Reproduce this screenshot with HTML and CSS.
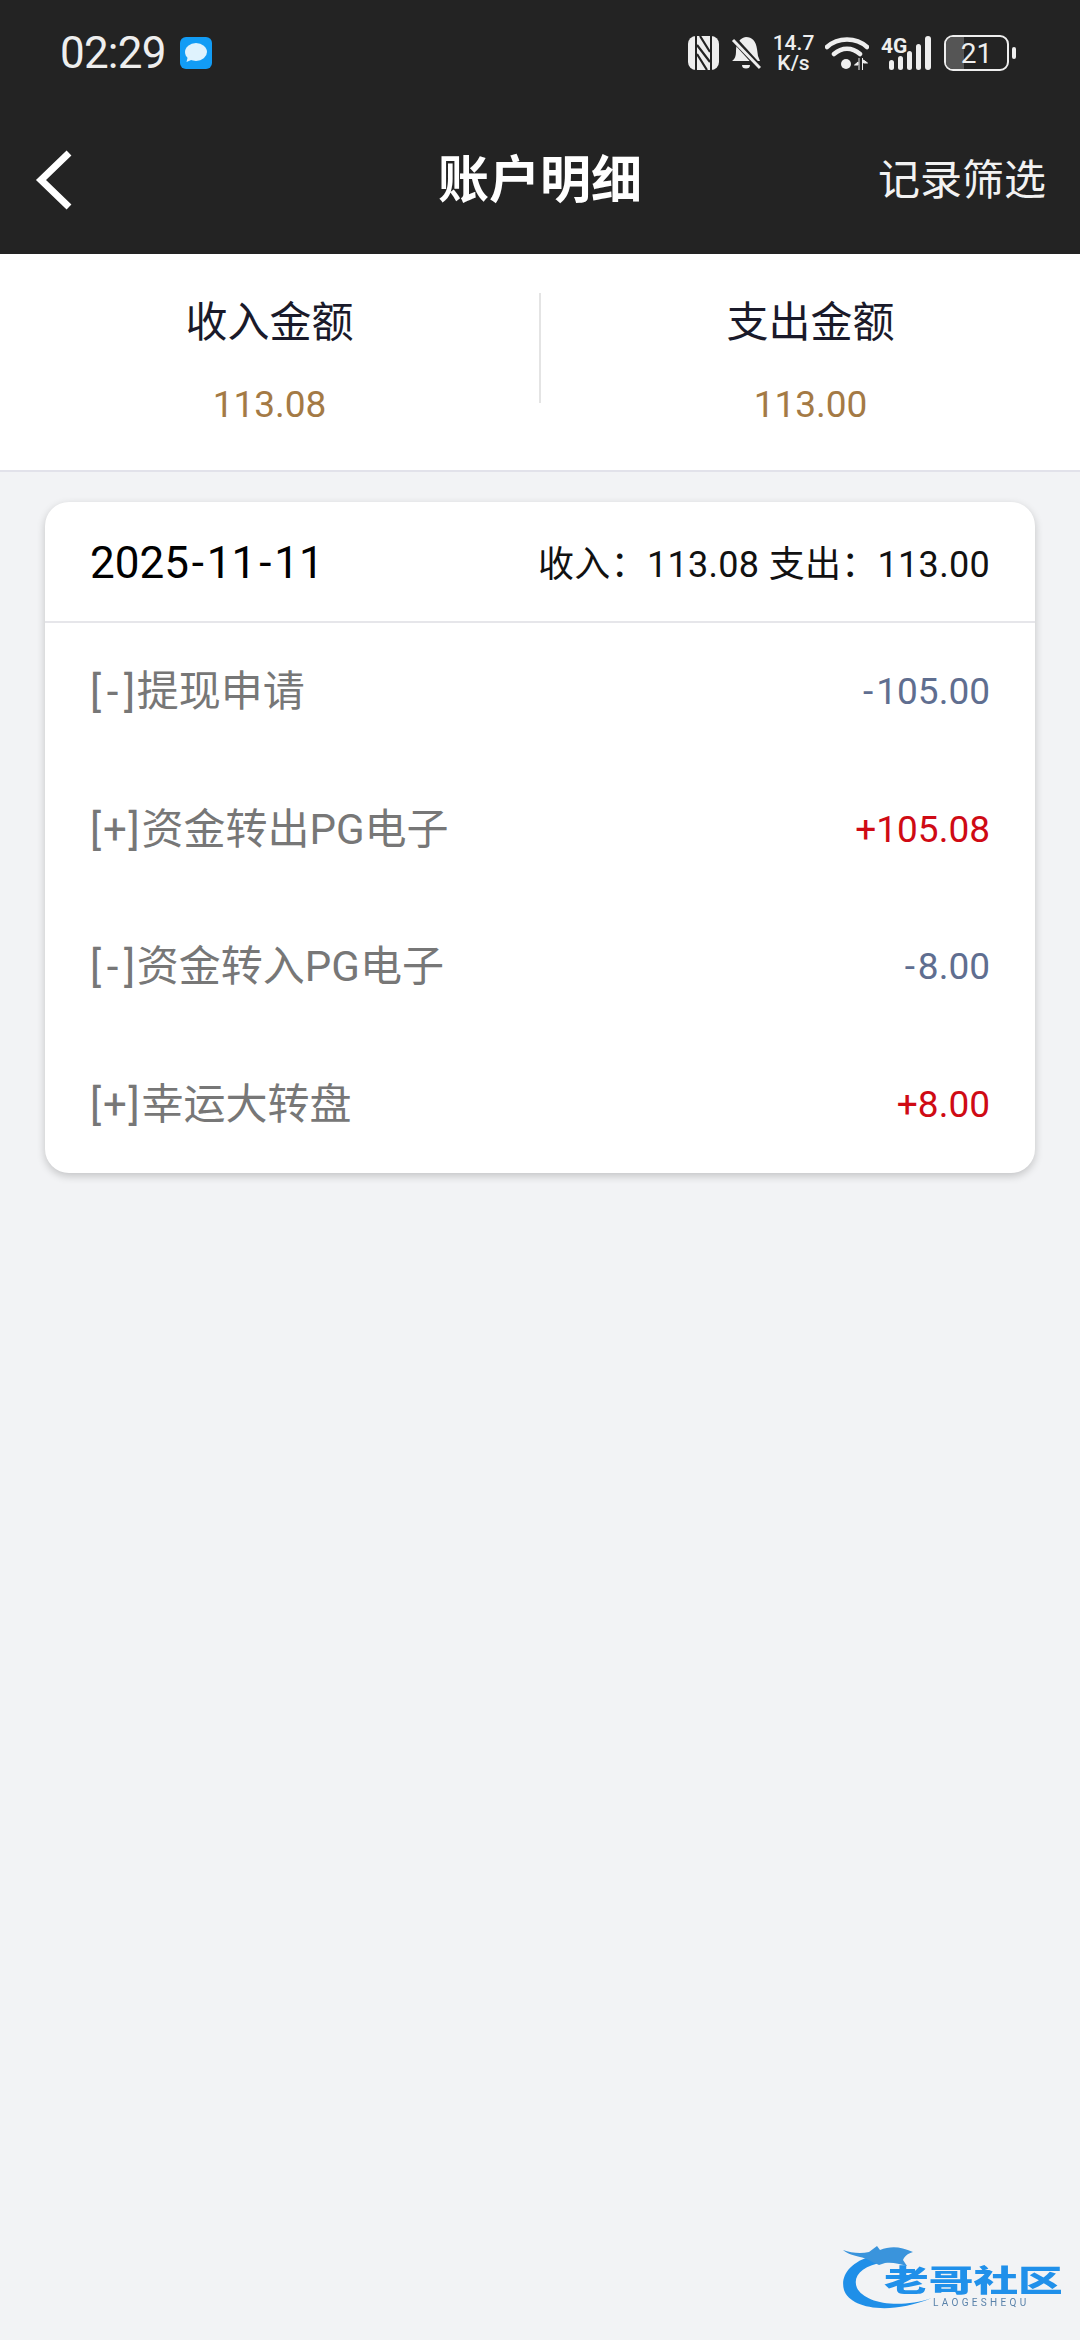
FILE: index.html
```html
<!DOCTYPE html>
<html lang="zh-CN">
<head>
  <meta charset="UTF-8">
  <meta name="viewport" content="width=device-width, initial-scale=1.0">
  <title>账户明细</title>
  <link rel="stylesheet" href="styles.css">
</head>
<body>

  <div class="top">
    <!-- status bar -->
    <div class="status">
      <span class="time">02:29</span>
      <svg class="msg-icon" width="32" height="32" viewBox="0 0 32 32">
        <rect width="32" height="32" rx="6" fill="#129cf5"/>
        <ellipse cx="16" cy="15" rx="11" ry="9" fill="#dff2fd"/>
        <path d="M8 19l-1.500 6 7-3z" fill="#dff2fd"/>
      </svg>
      <div class="status-right">
        <svg width="31" height="34" viewBox="0 0 31 34">
          <rect width="31" height="34" rx="8" fill="#eee"/>
          <path d="M8 0v34M23 0v34" stroke="#232323" stroke-width="2"/>
          <path d="M9 9l13 17M9 18l10 16M22 16L12 0" fill="none" stroke="#232323" stroke-width="2.200"/>
        </svg>
        <svg width="30" height="34" viewBox="0 0 30 34">
          <path d="M1 25c3-2 4-5 4-10 0-8 4-13 10-14 6 0 10 4 11 12l1 7 2 5z" fill="#eee"/>
          <path d="M11 29a4 3.500 0 0 0 8 0z" fill="#eee"/>
          <path d="M0 0l30 33" stroke="#232323" stroke-width="6"/>
          <path d="M2 4l27 28" stroke="#eee" stroke-width="3"/>
        </svg>
        <div class="speed"><span>14.7</span><span>K/s</span></div>
        <svg class="wifi" width="44" height="34" viewBox="0 0 44 34">
          <path d="M2 11c11-10 29-10 40 0M9 18c8-7 18-7 26 0" fill="none" stroke="#eee" stroke-width="4.500" stroke-linecap="round"/>
          <circle cx="21" cy="28" r="5" fill="#eee"/>
          <path d="M33 26l-3.500 3H33zM34 22v12M37.500 22v12M38.500 24l4 3h-4z" fill="#eee" stroke="#eee" stroke-width="1"/>
        </svg>
        <div class="net">
          <span class="net-label">4G</span>
          <svg width="42" height="34" viewBox="0 0 42 34">
            <rect x="0" y="24" width="5" height="10" rx="2.500" fill="#eee"/>
            <rect x="9" y="20" width="5" height="14" rx="2.500" fill="#eee"/>
            <rect x="18" y="15" width="5" height="19" rx="2.500" fill="#eee"/>
            <rect x="27" y="8" width="5" height="26" rx="2.500" fill="#eee"/>
            <rect x="36" y="0" width="6" height="34" rx="3" fill="#eee"/>
          </svg>
        </div>
        <div class="battery">
          <div class="battery-box">
            <div class="battery-fill"></div>
            <span class="battery-num">21</span>
          </div>
          <div class="battery-tip"></div>
        </div>
      </div>
    </div>

    <!-- nav -->
    <div class="nav">
      <svg class="back" width="38" height="60" viewBox="0 0 38 60">
        <path d="M34 3L6 30l28 27" fill="none" stroke="#fff" stroke-width="7"/>
      </svg>
      <div class="nav-title">账户明细</div>
      <div class="nav-link">记录筛选</div>
    </div>
  </div>

  <div class="summary">
    <div class="summary-col">
      <div class="summary-label">收入金额</div>
      <div class="summary-num">113.08</div>
    </div>
    <div class="summary-line"></div>
    <div class="summary-col">
      <div class="summary-label">支出金额</div>
      <div class="summary-num">113.00</div>
    </div>
  </div>

  <div class="card">
    <div class="card-head">
      <span class="card-date">2025<span class="dash">-</span>11<span class="dash">-</span>11</span>
      <span class="card-total">收入：113.08 支出：113.00</span>
    </div>
    <div class="rows">
      <div class="row">
        <span class="row-name"><span class="tag">[<span class="dash">-</span>]</span>提现申请</span>
        <span class="row-num minus"><span class="dash">-</span>105.00</span>
      </div>
      <div class="row">
        <span class="row-name"><span class="tag">[+]</span>资金转出PG电子</span>
        <span class="row-num plus">+105.08</span>
      </div>
      <div class="row">
        <span class="row-name"><span class="tag">[<span class="dash">-</span>]</span>资金转入PG电子</span>
        <span class="row-num minus"><span class="dash">-</span>8.00</span>
      </div>
      <div class="row">
        <span class="row-name"><span class="tag">[+]</span>幸运大转盘</span>
        <span class="row-num plus">+8.00</span>
      </div>
    </div>
  </div>

  <!-- watermark -->
  <div class="logo">
    <svg class="logo-dragon" width="100" height="72" viewBox="0 0 100 72">
      <path d="M32 12C10 18 0 32 4 46c6 18 44 26 88 8C56 66 24 58 17 44 12 32 22 22 44 18z" fill="#1f8fe8"/>
      <path d="M3 6c8 3 18 4 26 2l8-6 3 4c10-4 20-4 33 2-6 2-8 4-10 8l4 6c-8-2-14-4-22-3l-6 2C32 18 26 14 20 13 12 11 6 9 3 6z" fill="#3a94dc"/>
    </svg>
    <div class="logo-name">老哥社区</div>
    <div class="logo-sub">LAOGESHEQU</div>
  </div>

</body>
</html>
```

FILE: styles.css
```css
body {
  margin: 0;
  width: 1080px;
  height: 2340px;
  overflow: hidden;
  position: relative;
  background: #f2f3f5;
  font-family: Roboto, "Noto Sans CJK SC", sans-serif;
}

.top {
  height: 254px;
  background: #232323;
}

/* status bar */
.status {
  display: flex;
  align-items: center;
  height: 106px;
  padding: 0 64px 0 60px;
}

.time {
  font-size: 44px;
  color: #eeeeee;
  letter-spacing: -0.8px;
}

.msg-icon {
  margin-left: 14px;
}

.status-right {
  display: flex;
  align-items: center;
  gap: 12px;
  margin-left: auto;
}

.speed {
  display: flex;
  flex-direction: column;
  align-items: center;
  width: 41px;
  font-size: 21px;
  line-height: 20px;
  font-weight: 500;
  color: #eeeeee;
}

.wifi {
  margin-left: -1px;
}

.net {
  display: flex;
  align-items: flex-start;
  height: 34px;
}

.net-label {
  width: 8px;
  font-size: 21px;
  line-height: 20px;
  font-weight: 700;
  color: #eeeeee;
}

.battery {
  display: flex;
  align-items: center;
  gap: 3px;
  margin-left: 1px;
}

.battery-box {
  position: relative;
  display: flex;
  align-items: center;
  justify-content: center;
  width: 65px;
  height: 36px;
  box-sizing: border-box;
  border: 2px solid #eeeeee;
  border-radius: 9px;
  overflow: hidden;
}

.battery-fill {
  position: absolute;
  left: 0;
  top: 0;
  bottom: 0;
  width: 30%;
  background: #555555;
}

.battery-num {
  position: relative;
  font-size: 28px;
  color: #eeeeee;
}

.battery-tip {
  width: 4px;
  height: 12px;
  border-radius: 2px;
  background: #eeeeee;
}

/* nav */
.nav {
  position: relative;
  display: flex;
  align-items: center;
  justify-content: center;
  height: 148px;
}

.back {
  position: absolute;
  left: 35px;
  top: 44px;
}

.nav-title {
  margin-bottom: 8px;
  font-size: 51px;
  font-weight: 700;
  color: #ffffff;
}

.nav-link {
  position: absolute;
  right: 34px;
  top: 40px;
  font-size: 42px;
  color: #f2f2f2;
}

/* summary */
.summary {
  display: flex;
  align-items: center;
  height: 216px;
  background: #ffffff;
  border-bottom: 2px solid #e2e2ea;
}

.summary-col {
  flex: 1;
  margin-bottom: 3px;
  text-align: center;
}

.summary-line {
  align-self: flex-start;
  width: 2px;
  height: 110px;
  margin-top: 39px;
  background: #e4e4e4;
}

.summary-label {
  font-size: 42px;
  line-height: 56px;
  color: #1a1a2a;
}

.summary-num {
  margin-top: 32px;
  font-size: 37px;
  line-height: 44px;
  color: #a47a45;
}

/* card */
.card {
  margin: 30px 45px 0;
  background: #ffffff;
  border-radius: 24px;
  box-shadow: 0 3px 8px rgba(0, 0, 0, 0.2);
}

.card-head {
  display: flex;
  align-items: center;
  justify-content: space-between;
  height: 119px;
  padding: 0 45px;
  border-bottom: 2px solid #e6e6ea;
}

.card-date {
  margin-top: 2px;
  font-size: 44px;
  color: #000000;
}

.card-date .dash {
  padding: 0 0.065em;
}

.card-total {
  margin-bottom: 2px;
  font-size: 36px;
  letter-spacing: 0.3px;
  color: #111111;
}

.rows {
  padding: 0 45px;
}

.row {
  display: flex;
  align-items: center;
  justify-content: space-between;
  height: 137.500px;
}

.row-name {
  margin-bottom: 8px;
  font-size: 42px;
  color: #777777;
}

.row-name .dash {
  padding: 0 0.09em;
}

.tag {
  letter-spacing: 1.800px;
}

.row-num {
  font-size: 37px;
}

.row-num .dash {
  padding: 0 0.08em;
}

.minus {
  color: #5f6e90;
}

.plus {
  color: #cf0a14;
}

/* watermark */
.logo {
  position: absolute;
  left: 840px;
  top: 2244px;
  width: 230px;
  height: 74px;
  filter: blur(0.7px);
}

.logo-dragon {
  position: absolute;
  left: 0;
  top: 0;
}

.logo-name {
  position: absolute;
  left: 44px;
  top: 21px;
  width: 120px;
  font-size: 30px;
  line-height: 32px;
  font-weight: 900;
  color: #2090ea;
  white-space: nowrap;
  transform-origin: left center;
  transform: scaleX(1.49);
}

.logo-sub {
  position: absolute;
  left: 93px;
  top: 53px;
  font-size: 10px;
  line-height: 12px;
  letter-spacing: 3.300px;
  color: #5a82aa;
}
```
